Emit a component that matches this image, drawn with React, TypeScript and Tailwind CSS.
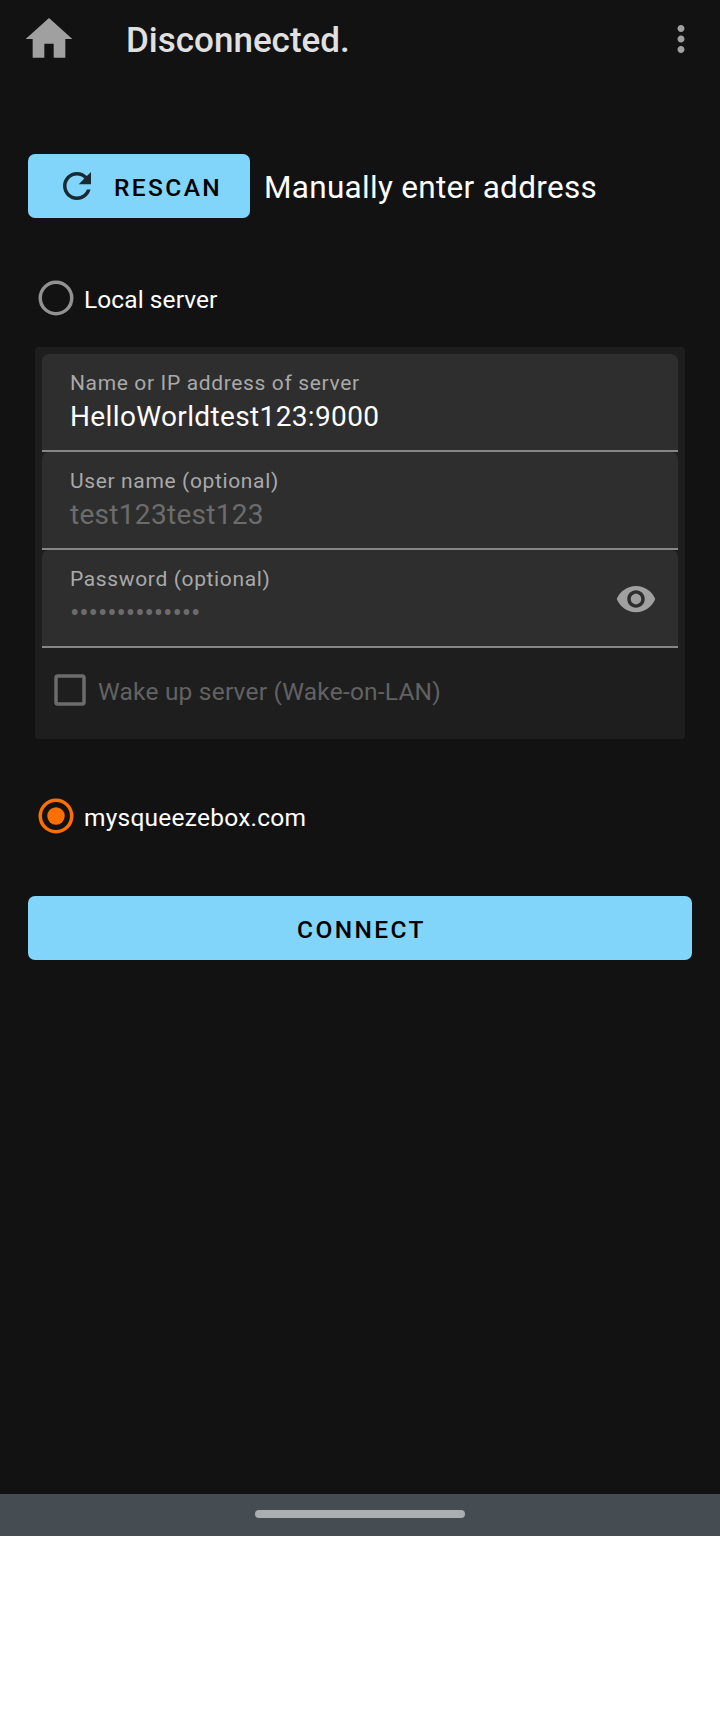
import type { ReactNode } from "react";

function Icon({ d, className }: { d: string; className: string }) {
  return (
    <svg viewBox="0 0 24 24" fill="currentColor" className={className} aria-hidden="true">
      <path d={d} />
    </svg>
  );
}

const HOME = "M10 20v-6h4v6h5v-8h3L12 3 2 12h3v8z";
const MORE =
  "M12 8c1.1 0 2-.9 2-2s-.9-2-2-2-2 .9-2 2 .9 2 2 2zm0 2c-1.1 0-2 .9-2 2s.9 2 2 2 2-.9 2-2-.9-2-2-2zm0 6c-1.1 0-2 .9-2 2s.9 2 2 2 2-.9 2-2-.9-2-2-2z";
const REFRESH =
  "M17.65 6.35C16.2 4.9 14.21 4 12 4c-4.42 0-7.99 3.58-7.99 8s3.57 8 7.99 8c3.73 0 6.84-2.55 7.73-6h-2.08c-.82 2.33-3.04 4-5.65 4-3.31 0-6-2.69-6-6s2.69-6 6-6c1.66 0 3.14.69 4.22 1.78L13 11h7V4l-2.35 2.35z";
const EYE =
  "M12 4.5C7 4.5 2.73 7.61 1 12c1.73 4.39 6 7.5 11 7.5s9.27-3.11 11-7.5c-1.73-4.39-6-7.5-11-7.5zM12 17c-2.76 0-5-2.24-5-5s2.24-5 5-5 5 2.24 5 5-2.24 5-5 5zm0-8c-1.66 0-3 1.34-3 3s1.34 3 3 3 3-1.34 3-3-1.34-3-3-3z";

function Radio({ label, checked }: { label: string; checked?: boolean }) {
  return (
    <div role="radio" aria-checked={!!checked} className="flex h-14 items-center pl-[35px]">
      <svg
        viewBox="0 0 24 24"
        className={checked ? "size-[42px] text-[#ff6f00]" : "size-[42px] text-[#919191]"}
        aria-hidden="true"
      >
        <circle cx="12" cy="12" r="9" fill="none" stroke="currentColor" strokeWidth="2" />
        {checked && <circle cx="12" cy="12" r="5" fill="currentColor" />}
      </svg>
      <span
        className={
          checked
            ? "pt-[3px] pl-[7px] text-[24.5px] leading-8 tracking-[0.24px] text-white"
            : "pt-[3px] pl-[7px] text-[24.5px] leading-8 tracking-[0.08px] text-white"
        }
      >
        {label}
      </span>
    </div>
  );
}

function Field({ label, children, trailing }: { label: string; children: ReactNode; trailing?: ReactNode }) {
  return (
    <div className="flex h-[98px] items-start justify-between rounded-t-[7px] border-b-2 border-[#868686] bg-[#2e2e2e] pr-[21px] pl-7">
      <div className="flex flex-col pt-[15px]">
        <span className="h-7 text-[21px] leading-7 tracking-[0.64px] text-[#a9a9a9]">{label}</span>
        <span className="h-10 text-[28px] leading-10">{children}</span>
      </div>
      {trailing}
    </div>
  );
}

export default function App() {
  return (
    <div className="h-[1712px] w-[720px] bg-white font-['Roboto',sans-serif]">
      <div className="flex h-[1494px] flex-col bg-[#121212]">
        <header className="flex h-20 items-center pr-[18px] pl-[21px]">
          <Icon d={HOME} className="mb-[2px] size-14 text-[#a0a0a0]" />
          <h1 className="ml-[49px] flex-1 pt-[2px] text-[35px] leading-[42px] font-medium text-[#e0e0e0]">
            Disconnected.
          </h1>
          <Icon d={MORE} className="mb-[2px] size-[42px] text-[#a0a0a0]" />
        </header>

        <main className="flex flex-col px-7 pt-[74px]">
          <div className="flex h-16 items-center">
            <button className="flex h-16 w-[222px] items-center rounded-[7px] bg-[#81d4fa] pl-7 text-black">
              <Icon d={REFRESH} className="size-[42px] text-[#1a2a32]" />
              <span className="pt-[3px] pl-4 text-[24.5px] leading-8 font-medium tracking-[2.4px]">RESCAN</span>
            </button>
            <span className="pt-[3px] pl-[14px] text-[31.5px] leading-10 tracking-[0.3px] text-white">
              Manually enter address
            </span>
          </div>

          <div className="-mx-7 mt-[52px]">
            <Radio label="Local server" />
          </div>

          <section className="mx-[7px] mt-[21px] h-[392px] rounded-[3.5px] bg-[#1e1e1e] p-[7px]">
            <Field label="Name or IP address of server">
              <span className="tracking-[0.36px] text-white">HelloWorldtest123:9000</span>
            </Field>
            <Field label="User name (optional)">
              <span className="tracking-[0.3px] text-[#6c6c6c]">test123test123</span>
            </Field>
            <Field
              label="Password (optional)"
              trailing={<Icon d={EYE} className="mt-7 size-[42px] text-[#a0a0a0]" />}
            >
              <span className="tracking-[-0.14px] text-[#6c6c6c]">••••••••••••••</span>
            </Field>
            <div className="flex h-[84px] items-center pl-[7px]">
              <svg viewBox="0 0 24 24" className="size-[42px] text-[#6c6c6c]" aria-hidden="true">
                <rect x="4" y="4" width="16" height="16" rx="1" fill="none" stroke="currentColor" strokeWidth="2" />
              </svg>
              <span className="pt-[3px] pl-[7px] text-[24.5px] leading-8 tracking-[0.2px] text-[#626262]">
                Wake up server (Wake-on-LAN)
              </span>
            </div>
          </section>

          <div className="-mx-7 mt-[49px]">
            <Radio label="mysqueezebox.com" checked />
          </div>

          <button className="mt-[52px] flex h-16 items-center justify-center rounded-[7px] bg-[#81d4fa] pt-[3px] pl-[3px] text-[24.5px] leading-8 font-medium tracking-[2.4px] text-black">
            CONNECT
          </button>
        </main>
      </div>
      <nav className="flex h-[42px] justify-center bg-[#454d52] pt-4">
        <div className="h-2 w-[210px] rounded-full bg-[#aaaeb1]" />
      </nav>
    </div>
  );
}
